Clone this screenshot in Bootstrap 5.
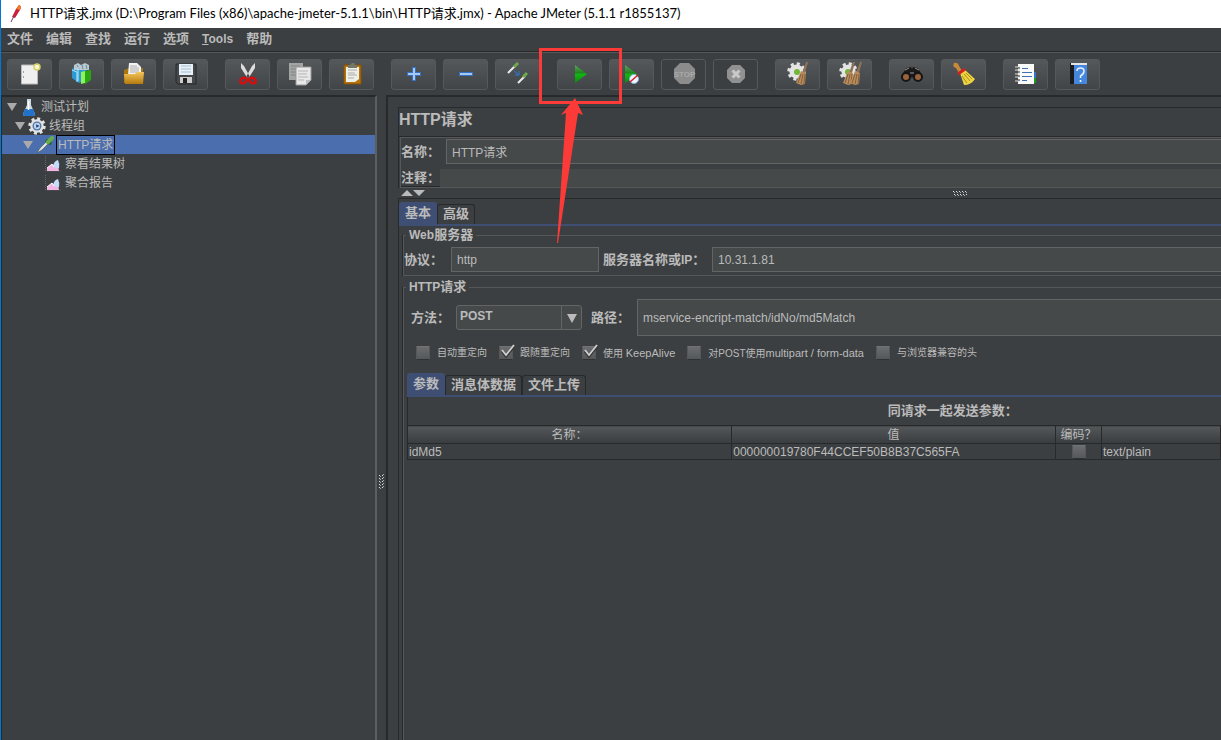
<!DOCTYPE html>
<html lang="zh-CN">
<head>
<meta charset="utf-8">
<meta name="viewport" content="width=device-width, initial-scale=1">
<title>HTTP请求.jmx - Apache JMeter</title>
<link href="https://cdn.jsdelivr.net/npm/bootstrap@5.3.0/dist/css/bootstrap.min.css" rel="stylesheet">
<style>
:root{--bg:#3c3f41;--field:#45494a;--line:#646464;--dark:#27292b;--light:#555759;--ink:#bbb;--sel:#4b6eaf;--tab:#3f4f73}
body{background:var(--bg);color:var(--ink);font:12px/16px "Liberation Sans","Noto Sans CJK SC",sans-serif;border-left:1px solid #0078d7;overflow:hidden}
.titlebar{height:28px;background:#fff;color:#000;font:13px/16px Lato,"Noto Sans CJK SC",sans-serif;padding:0 0 3px 8px;gap:7px}
.menubar{height:25px;gap:13px;padding:0 6px 2px;border-bottom:1px solid var(--light);box-shadow:inset 0 -1px var(--dark)}
.menubar a{color:var(--ink);text-decoration:none}
.lbl,.menubar{font-size:13px;font-weight:bold}
.lat{font-size:12px}
.toolbar{height:42px;padding:0 6px;gap:17px}
.tool-set{gap:7px}
.tool{width:45px;height:31px;padding:0;border:1px solid #55595b;border-radius:3px;background:linear-gradient(#54585a,#424547);color:var(--ink);display:flex;align-items:center;justify-content:center}
.tool.off{background:#3c3f41}
.tool svg{width:24px;height:24px;display:block}
.callout-mark{position:absolute;left:-18px;top:-11px;width:84px;height:196px;z-index:5;pointer-events:none}
.tree-pane{flex:0 0 376px;border:solid var(--dark);border-width:2px 0 0 1px;border-right:2px solid #5c5f61}
.tree-row{height:19px;gap:3px}
.tree-row svg{flex:none}
.lv0{padding-left:5px}.lv1{padding-left:13px}.lv2{padding-left:21px}.lv3{padding-left:43px}
.picked{background:var(--sel)}
.picked span{outline:1px solid #000;padding:1px}
.splitter{flex:0 0 9px}
.splitter-track{height:120%}
.main-pane{border:solid var(--dark);border-width:2px 0 0 2px;padding:10px 0 0 10px;min-width:0}
.sheet{border:1px solid var(--dark);border-right:0;border-bottom:0}
.heading{font-size:16px;line-height:24px;height:29px;font-weight:bold;border-bottom:1px solid var(--dark);margin:0}
.ident{margin-left:1px;border:1px solid var(--light);border-right:0;padding-top:1px;box-shadow:inset 0 -1px var(--dark)}
.comment-row{margin-top:5px}
.w-name{flex:0 0 45px}.w-comment{flex:0 0 39px}.w-proto{flex:0 0 47px}.w-host{flex:0 0 109px}.w-path{flex:0 0 46px;margin-left:9px}
.field{background:var(--field);border:1px solid var(--line);color:var(--ink);height:25px;padding:0 5px;font-size:12px;border-radius:0;min-width:0;outline:0}
.field.bare{border:0;height:18px}
.field.tall{height:37px}
.proto{flex:0 0 148px}
.split-row{height:10px;margin-left:-1px;background:var(--bg)}
.beyond{width:137%;flex:none}
.caption-row{width:134%;height:28px;line-height:28px}
.tabs{border-bottom:2px solid var(--tab);padding-top:3px}
.tabs .nav-link{color:var(--ink);font-size:13px;font-weight:bold;line-height:18px;height:20px;padding:0 5px;border:1px solid var(--dark);border-bottom:0;border-radius:3px 3px 0 0}
.tabs .nav-link.active{background:var(--tab);border-color:var(--tab);height:22px;line-height:20px}
.group{border:1px solid var(--light);border-right:0;box-shadow:-1px 0 var(--dark);margin:1px 0 0 4px;padding:0}
.group+.group{margin-top:3px}
.group legend{width:auto;float:none;font-size:13px;line-height:16px;font-weight:bold;margin:0 0 0 2px;padding:0 3px}
.server-row{padding:4px 0 3px}
.request-row{padding:4px 0 0 7px}
.combo{width:126px;position:relative}
.combo select{appearance:none;width:100%;height:25px;border:1px solid var(--line);border-radius:3px;background:#45494a;color:var(--ink);font-weight:bold;font-size:12px;padding:0 3px 3px}
.combo svg{position:absolute;right:0;top:0;pointer-events:none}
.tick{appearance:none;position:relative;width:14px;height:14px;margin:0;border:1px solid #77797a;border-color:#707274 #55575a #2f3133;background:linear-gradient(#6a6c6e,#55585a);flex:none;border-radius:1px}
.tick:checked::after{content:"";position:absolute;left:0;top:-3px;width:15px;height:14px;background:url("data:image/svg+xml,%3Csvg xmlns='http://www.w3.org/2000/svg' viewBox='0 0 15 14'%3E%3Cpath d='M2 7l4 5 8-10' fill='none' stroke='%23333' stroke-width='3'/%3E%3Cpath d='M2 6l4 5 8-10' fill='none' stroke='%23ccc' stroke-width='2'/%3E%3C/svg%3E")}
.opts{font-size:10px;gap:12px;margin-top:9px;padding-left:12px;height:16px}
.opts label{gap:7px;display:flex;align-items:center;white-space:nowrap}
.opts .lat{font-size:11px}
.params{margin:9px 0 0 3px}
.params-body{border-left:1px solid var(--dark)}
.grid-table{table-layout:fixed;border-top:1px solid var(--dark);width:100%}
.grid-table th{height:18px;padding:0;font-weight:normal;text-align:center;background:linear-gradient(#54585a,#393c3e);border-right:1px solid var(--dark);border-bottom:1px solid var(--dark);line-height:16px}
.grid-table td{height:16px;padding:0 1px;line-height:14px;border-right:1px solid var(--dark);border-bottom:1px solid var(--dark);white-space:nowrap}
.c-enc{width:46px}.c-type{width:119px}
</style>
</head>
<body class="vh-100 d-flex flex-column">
<svg class="position-absolute" width="0" height="0" aria-hidden="true"><defs>
<linearGradient id="gg" x1="0" y1="0" x2="0" y2="1"><stop offset="0" stop-color="#56a856"/><stop offset=".45" stop-color="#1d841d"/><stop offset=".5" stop-color="#14b814"/><stop offset="1" stop-color="#0b8a0b"/></linearGradient>
<linearGradient id="gold" x1="0" y1="0" x2="0" y2="1"><stop offset="0" stop-color="#f5c65c"/><stop offset="1" stop-color="#b57a0c"/></linearGradient>
</defs>
<symbol id="gear" viewBox="0 0 20 20"><circle cx="10" cy="10" r="7.5" fill="#e4e4e4"/><circle cx="10" cy="10" r="8" fill="none" stroke="#e4e4e4" stroke-width="3.4" stroke-dasharray="3.2 3.08"/></symbol>
<symbol id="broom" viewBox="0 0 12 24"><path d="M10 0h2L9 11H6z" fill="#8f7256"/><path d="M5 9l5 2-1 11-4 1-5-2 2-5z" fill="#b78c5e"/><path d="M5 12L2 21M7 12L5 22M9 12L8 22" stroke="#7b5631" stroke-width=".8"/></symbol>
<symbol id="chart" viewBox="0 0 16 16"><path d="M.5 0v15H16" stroke="#656565" stroke-dasharray="1 1" fill="none"/><path d="M2 15v-3l5-4 2 2 4-1 1 6z" fill="#f3b5e4"/><path d="M8 10q1-5 5-6 2 4 1 8-4 1-6-2z" fill="#c4dcfa"/><path d="M2 12l5-4 2 3" fill="none" stroke="#fff"/></symbol>
</svg>

<header>
<div class="titlebar d-flex align-items-center text-nowrap">
<svg width="14" height="18" viewBox="0 0 14 18"><path d="M10 1q3 1 1 5L6 14l-3-1L7 5z" fill="#c9203c"/><path d="M10 1q3 1 1 5L7 5z" fill="#ef7a29"/><path d="M5 12l-3 6" stroke="#70386d"/></svg>
<span>HTTP请求.jmx (D:\Program Files (x86)\apache-jmeter-5.1.1\bin\HTTP请求.jmx) - Apache JMeter (5.1.1 r1855137)</span>
</div>
<nav class="menubar d-flex align-items-center">
<a href="#">文件</a><a href="#">编辑</a><a href="#">查找</a><a href="#">运行</a><a href="#">选项</a><a href="#" class="lat"><u>T</u>ools</a><a href="#">帮助</a>
</nav>
<div class="toolbar d-flex align-items-center">
<div class="tool-set d-flex">
<button class="tool" aria-label="新建"><svg viewBox="0 0 24 24"><path d="M3.500 3h16v19h-16z" fill="#efefef" stroke="#b9b9b9"/><path d="M5 10h1M5 15h1" stroke="#555"/><circle cx="19" cy="5" r="3" fill="#fbf9d0" stroke="#d8cf6a" stroke-width="1.500"/></svg></button>
<button class="tool" aria-label="模板"><svg viewBox="0 0 24 24"><path d="M2 7l5-4 9 1v14l-7 3-7-5z" fill="#2b9ad1"/><path d="M4 3l4-2 3 2 4-2 4 2v5H4z" fill="#b9cad2"/><path d="M7 3l2 4M12 3l1 4M16 3l1 4" stroke="#6f8791"/><path d="M2 8l5 2v10M8 5v14" stroke="#bce8fb" fill="none"/><path d="M11 10l4-1v12l-4 1z" fill="#8ff25a"/><path d="M15 9l6-1v10l-6 4z" fill="#2aa613"/></svg></button>
<button class="tool" aria-label="打开"><svg viewBox="0 0 24 24"><path d="M2 21V8l5-2h14v15z" fill="#a87510"/><path d="M7 1h8l4 4v8H6z" fill="#f3f3f3"/><path d="M8 4h7M8 6h9M8 8h9M8 10h9" stroke="#999" stroke-width=".8"/><path d="M2 12h11l2-2h7l-1 12H3z" fill="url(#gold)"/></svg></button>
<button class="tool" aria-label="保存"><svg viewBox="0 0 24 24"><path d="M2 2h20v20H4l-2-2z" fill="#45484a" stroke="#25282a"/><path d="M5 2h14v11H5z" fill="#e8f0f7"/><path d="M7 4h10M7 7h10M7 10h10" stroke="#a9bfd3"/><path d="M6 15h12v6H6z" fill="#ccc"/><path d="M9 16h4v5H9z" fill="#222"/></svg></button>
</div>
<div class="tool-set d-flex">
<button class="tool" aria-label="剪切"><svg viewBox="0 0 24 24"><path d="M5 1l3 3 6 11-2 2L5 6zM19 1l-3 3-6 11 2 2 7-11z" fill="#ddd"/><ellipse cx="7.500" cy="18.500" rx="3.500" ry="2.500" fill="none" stroke="#d90d0d" stroke-width="2.500" transform="rotate(-30 7.500 18.500)"/><ellipse cx="16.500" cy="18.500" rx="3.500" ry="2.500" fill="none" stroke="#d90d0d" stroke-width="2.500" transform="rotate(30 16.500 18.500)"/></svg></button>
<button class="tool" aria-label="复制"><svg viewBox="0 0 24 24"><path d="M1 1h14v17H1z" fill="#a3a5a5"/><path d="M3 4h9M3 7h9M3 10h6M3 13h5" stroke="#818383"/><path d="M8 5h15v13l-5 5H8z" fill="#e8e8e8" stroke="#999"/><path d="M10 9h10M10 12h9M10 15h10M10 18h6" stroke="#b5b5b5"/><path d="M18 23v-5h5z" fill="#bbb"/></svg></button>
<button class="tool" aria-label="粘贴"><svg viewBox="0 0 24 24"><path d="M4 3h17v19H4z" fill="#b9730b" stroke="#80500b"/><path d="M6 5h13v12l-4 3H6z" fill="#efefea"/><path d="M8 8h9M8 11h7M8 13h9M8 16h6" stroke="#aaa"/><path d="M8 3h2l2-2h2l1 2h2v3H8z" fill="#737768"/></svg></button>
</div>
<div class="tool-set d-flex">
<button class="tool" aria-label="展开"><svg viewBox="0 0 24 24"><path d="M12 5v14M5 12h14" stroke="#3672c4" stroke-width="4"/><path d="M12 6v12M6 12h12" stroke="#a6c8f0" stroke-width="2"/></svg></button>
<button class="tool" aria-label="收起"><svg viewBox="0 0 24 24"><path d="M5 12h14" stroke="#3672c4" stroke-width="4"/><path d="M6 12h12" stroke="#a6c8f0" stroke-width="2"/></svg></button>
<button class="tool" aria-label="切换"><svg viewBox="0 0 24 24"><path d="M2 11l7-7M12 21l7-7" stroke="#e9e9e9" stroke-width="2"/><path d="M8 5l4-4M17 15l4-4" stroke="#6fa94e" stroke-width="3"/><path d="M8 9l5 4m0-4v4H9" stroke="#287bdf" fill="none"/></svg></button>
</div>
<div class="tool-set d-flex">
<div class="position-relative">
<button class="tool" aria-label="启动"><svg viewBox="0 0 24 24"><path d="M7 3l12 9-12 9z" fill="url(#gg)"/></svg></button>
<svg class="callout-mark" viewBox="0 0 84 196"><path d="M1.500 1.500h80v53h-80z" fill="none" stroke="#fc3a38" stroke-width="3"/><path d="M36 50l8 17-5-2L19 195h-1l9-130-5 2z" fill="#fc3a38"/></svg>
</div>
<button class="tool" aria-label="不停顿启动"><svg viewBox="0 0 24 24"><path d="M5 3l12 9-12 9z" fill="url(#gg)"/><circle cx="14" cy="17" r="4.500" fill="#eef5ff" stroke="#86b2df"/><path d="M10 20l8-7" stroke="#d42020" stroke-width="1.500"/></svg></button>
<button class="tool off" aria-label="停止"><svg viewBox="0 0 24 24"><path d="M8 1h9l6 6v9l-6 6H8l-6-6V7z" fill="#8c8c8c"/><text x="12.500" y="15" text-anchor="middle" font-size="8" font-weight="bold" fill="#a8a8a8">STOP</text></svg></button>
<button class="tool off" aria-label="关闭"><svg viewBox="0 0 24 24"><path d="M8 3h8l5 5v8l-5 5H8l-5-5V8z" fill="#919191"/><path d="M8.500 8.500l7 7m0-7l-7 7" stroke="#c9c9c9" stroke-width="3"/></svg></button>
</div>
<div class="tool-set d-flex">
<button class="tool" aria-label="清除"><svg viewBox="0 0 24 24"><use href="#gear" x="1" y="0" width="19" height="19"/><circle cx="11" cy="10" r="3" fill="#71b637"/><use href="#broom" x="10" y="0" width="12" height="24"/></svg></button>
<button class="tool" aria-label="清除全部"><svg viewBox="0 0 24 24"><use href="#gear" x="1" y="0" width="19" height="19"/><circle cx="10" cy="10" r="3" fill="#71b637"/><use href="#broom" x="5" y="0" width="12" height="24"/><use href="#broom" x="12" y="0" width="12" height="24"/></svg></button>
</div>
<div class="tool-set d-flex">
<button class="tool" aria-label="查找"><svg viewBox="0 0 24 24"><path d="M1 15L6 6l5-1 1 2 1-2 5 1 5 9-5 4-6-4-6 4z" fill="#1a1a1a"/><path d="M5 8l4-2M19 8l-4-2M10 11h4" stroke="#989898"/><circle cx="6" cy="15" r="4" fill="#9c623b" stroke="#151515" stroke-width="2"/><circle cx="18" cy="15" r="4" fill="#9c623b" stroke="#151515" stroke-width="2"/></svg></button>
<button class="tool" aria-label="重置查找"><svg viewBox="0 0 24 24"><path d="M2 1q4-1 5 3l3 5-3 2-3-5Q0 5 2 1z" fill="#c88a38"/><path d="M8 11l5-3 10 9q-4 6-11 6z" fill="#ecd342"/><path d="M10 14l5 7M12 12l6 7M14 11l6 6" stroke="#aa8e16"/><path d="M6 12l7-5" stroke="#d02222" stroke-width="3"/></svg></button>
</div>
<div class="tool-set d-flex">
<button class="tool" aria-label="函数助手"><svg viewBox="0 0 24 24"><path d="M19 10h3v6h-3z" fill="#3277d0"/><path d="M19 16h3v5h-3z" fill="#1d9b20"/><path d="M4 2h16v20H4z" fill="#fafafa"/><path d="M8 6.500h6M8 10.500h10M8 14.500h10M8 18.500h5" stroke="#3b72b9"/><path d="M1 5h5M1 8h5M1 12h5M1 15h5M1 19h5" stroke="#ddd"/><path d="M4 6h2M4 10h2M4 14h2M4 18h2" stroke="#222"/></svg></button>
<button class="tool" aria-label="帮助"><svg viewBox="0 0 24 24"><path d="M4 1h17v21H4z" fill="#1c1c1c"/><path d="M5 1h16v2H5z" fill="#e4e4e4"/><path d="M8 3h13v19H8z" fill="#4687de"/><path d="M11 9q0-3 3.500-3T18 9t-3.500 5v2" fill="none" stroke="#e9f3ff" stroke-width="1.500"/><circle cx="14.500" cy="19" r="1" fill="#fff"/></svg></button>
</div>
</div>
</header>

<div class="d-flex flex-grow-1">
<aside class="tree-pane">
<ul class="list-unstyled m-0">
<li class="tree-row lv0 d-flex align-items-center"><svg width="10" height="8"><path d="M0 0h10L5 8z" fill="#aaa"/></svg><svg width="18" height="18" viewBox="0 0 18 18"><path d="M7 1h4v6l4 9q0 2-2 2H5q-2 0-2-2l4-9z" fill="#cbd9e5"/><path d="M5 11h8l2 5q0 2-2 2H5q-2 0-2-2z" fill="#2172c8"/><path d="M8.500 3v9" stroke="#fff" stroke-width="1.500"/></svg><span>测试计划</span></li>
<li class="tree-row lv1 d-flex align-items-center"><svg width="10" height="8"><path d="M0 0h10L5 8z" fill="#aaa"/></svg><svg width="18" height="18" viewBox="0 0 20 20"><use href="#gear" width="20" height="20"/><circle cx="10" cy="10" r="5" fill="#4d76aa"/><circle cx="10" cy="10" r="3.500" fill="#c3d4ea"/><path d="M9 8l4 2-4 2z" fill="#204b82"/></svg><span>线程组</span></li>
<li class="tree-row lv2 picked d-flex align-items-center"><svg width="10" height="8"><path d="M0 0h10L5 8z" fill="#aaa"/></svg><svg width="18" height="18" viewBox="0 0 18 18"><path d="M1 17l3-5 6-6 2 2-6 6z" fill="#d8e0df" stroke="#4b5a55" stroke-width=".7"/><path d="M10 4l5 4" stroke="#285825" stroke-width="3"/><path d="M12 6l4-4" stroke="#67ad4b" stroke-width="4" stroke-linecap="round"/></svg><span>HTTP请求</span></li>
<li class="tree-row lv3 d-flex align-items-center"><svg width="17" height="16"><use href="#chart" width="16" height="16"/></svg><span>察看结果树</span></li>
<li class="tree-row lv3 d-flex align-items-center"><svg width="17" height="16"><use href="#chart" width="16" height="16"/></svg><span>聚合报告</span></li>
</ul>
</aside>
<div class="splitter position-relative overflow-hidden"><div class="splitter-track position-absolute w-100 d-flex align-items-center justify-content-center"><svg width="5" height="16"><path d="M.5 1v15M3.500 1v15" stroke="#ddd" stroke-dasharray="1 2"/><path d="M1.500 2v14M4.500 0v14" stroke="#aaa" stroke-dasharray="1 2"/></svg></div></div>

<main class="main-pane d-flex flex-column flex-grow-1 overflow-hidden">
<section class="sheet">
<h1 class="heading">HTTP请求</h1>
<div class="ident">
<div class="d-flex align-items-center"><label class="lbl w-name" for="nm">名称：</label><input id="nm" class="field flex-grow-1 border-end-0" value="HTTP请求"></div>
<div class="comment-row d-flex align-items-center"><label class="lbl w-comment" for="cm">注释：</label><input id="cm" class="field bare flex-grow-1"></div>
</div>
</section>
<div class="split-row d-flex align-items-center">
<div class="beyond d-flex align-items-center position-relative"><svg width="28" height="7" class="ms-1"><path d="M0 6l6-6 6 6zM12 0h12l-6 6z" fill="#bbb"/></svg><svg class="position-absolute start-50 translate-middle-x" width="16" height="5"><path d="M0 .5h15M1 3.500h15" stroke="#ddd" stroke-dasharray="1 2"/><path d="M1 1.500h15M2 4.500h12" stroke="#aaa" stroke-dasharray="1 2"/></svg></div>
</div>
<section class="sheet flex-grow-1 d-flex flex-column">
<div class="tabs nav flex-nowrap align-items-end"><a class="nav-link active" href="#">基本</a><a class="nav-link" href="#">高级</a></div>
<fieldset class="group">
<legend><span class="lat">Web</span>服务器</legend>
<div class="server-row d-flex align-items-center"><label class="lbl w-proto" for="pr">协议：</label><input id="pr" class="field proto" size="1" value="http"><label class="lbl text-nowrap ms-1 w-host" for="ip">服务器名称或<span class="lat">IP</span>：</label><input id="ip" class="field flex-grow-1 border-end-0" value="10.31.1.81"></div>
</fieldset>
<fieldset class="group flex-grow-1 border-bottom-0">
<legend><span class="lat">HTTP</span>请求</legend>
<div class="request-row d-flex align-items-center"><label class="lbl w-name" for="me">方法：</label><div class="combo"><select id="me"><option>POST</option></select><svg width="21" height="25"><path d="M.5 0v25" stroke="#646464"/><path d="M6 9h10l-5 9z" fill="#bbb"/></svg></div><label class="lbl w-path" for="pa">路径：</label><input id="pa" class="field tall flex-grow-1 border-end-0" value="mservice-encript-match/idNo/md5Match"></div>
<div class="opts d-flex align-items-center">
<label><input class="tick" type="checkbox">自动重定向</label>
<label><input class="tick" type="checkbox" checked>跟随重定向</label>
<label><input class="tick" type="checkbox" checked><span>使用 <span class="lat">KeepAlive</span></span></label>
<label><input class="tick" type="checkbox"><span>对POST使用<span class="lat">multipart / form-data</span></span></label>
<label><input class="tick" type="checkbox">与浏览器兼容的头</label>
</div>
<div class="params">
<div class="tabs nav flex-nowrap align-items-end"><a class="nav-link active" href="#">参数</a><a class="nav-link" href="#">消息体数据</a><a class="nav-link" href="#">文件上传</a></div>
<div class="params-body overflow-hidden">
<div class="caption-row lbl text-center">同请求一起发送参数：</div>
<table class="grid-table">
<colgroup><col><col><col class="c-enc"><col class="c-type"></colgroup>
<thead><tr><th>名称：</th><th>值</th><th>编码？</th><th></th></tr></thead>
<tbody><tr><td>idMd5</td><td>000000019780F44CCEF50B8B37C565FA</td><td><input class="tick d-block mx-auto" type="checkbox" aria-label="编码"></td><td>text/plain</td></tr></tbody>
</table>
</div>
</div>
</fieldset>
</section>
</main>
</div>
<script src="https://cdn.jsdelivr.net/npm/bootstrap@5.3.0/dist/js/bootstrap.bundle.min.js"></script>
</body>
</html>
